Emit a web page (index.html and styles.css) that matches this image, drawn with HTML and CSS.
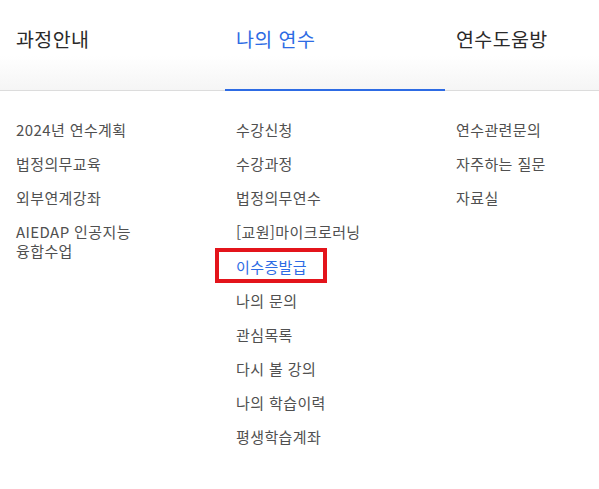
FILE: index.html
```html
<!DOCTYPE html>
<html lang="ko">
<head>
<meta charset="utf-8">
<title>메뉴</title>
<link rel="stylesheet" href="styles.css">
</head>
<body>
<div class="mega">
  <div class="tabs">
    <div class="tab">과정안내</div>
    <div class="tab active">나의 연수</div>
    <div class="tab">연수도움방</div>
  </div>
  <div class="cols">
    <ul class="col">
      <li>2024년 연수계획</li>
      <li>법정의무교육</li>
      <li>외부연계강좌</li>
      <li class="two">AIEDAP 인공지능<br>융합수업</li>
    </ul>
    <ul class="col">
      <li>수강신청</li>
      <li>수강과정</li>
      <li>법정의무연수</li>
      <li>[교원]마이크로러닝</li>
      <li class="current"><span class="mark">이수증발급</span></li>
      <li>나의 문의</li>
      <li>관심목록</li>
      <li>다시 볼 강의</li>
      <li>나의 학습이력</li>
      <li>평생학습계좌</li>
    </ul>
    <ul class="col">
      <li>연수관련문의</li>
      <li>자주하는 질문</li>
      <li>자료실</li>
    </ul>
  </div>
</div>
</body>
</html>
```
FILE: styles.css
```css
html, body {
  margin: 0;
  padding: 0;
  background: #fff;
  overflow: hidden;
}
body {
  font-family: "Noto Sans CJK KR", "Noto Sans", sans-serif;
  width: 599px;
  height: 489px;
}
.mega {
  width: 599px;
  overflow: hidden;
}
.tabs {
  display: flex;
  height: 90px;
  padding-left: 5px;
  border-bottom: 1px solid #dcdcdc;
  background: linear-gradient(to bottom, #ffffff 0%, #ffffff 62%, #f5f5f5 100%);
}
.tab {
  flex: 0 0 220px;
  box-sizing: border-box;
  padding-left: 11px;
  padding-top: 26px;
  font-size: 19.5px;
  font-weight: 400;
  line-height: 26px;
  color: #2a2a2a;
  letter-spacing: 0.4px;
}
.tab.active {
  color: #2d6be4;
  border-bottom: 2px solid #2d6be4;
  margin-bottom: -1px;
}
.cols {
  display: flex;
  padding-left: 5px;
  padding-top: 22px;
}
.col {
  list-style: none;
  margin: 0;
  padding: 0 0 0 11px;
  flex: 0 0 220px;
  box-sizing: border-box;
}
.col li {
  font-size: 15px;
  line-height: 18px;
  height: 18px;
  padding: 8px 0 8.15px;
  color: #505050;
  letter-spacing: 0.4px;
}
.col li.two {
  height: auto;
  line-height: 18.5px;
}
.col li.current {
  color: #2d6be4;
}
.mark {
  position: relative;
  display: inline-block;
}
.mark::after {
  content: "";
  position: absolute;
  left: -21px;
  right: -20px;
  top: -10px;
  bottom: -7px;
  border: 4px solid #e3141b;
}
```
